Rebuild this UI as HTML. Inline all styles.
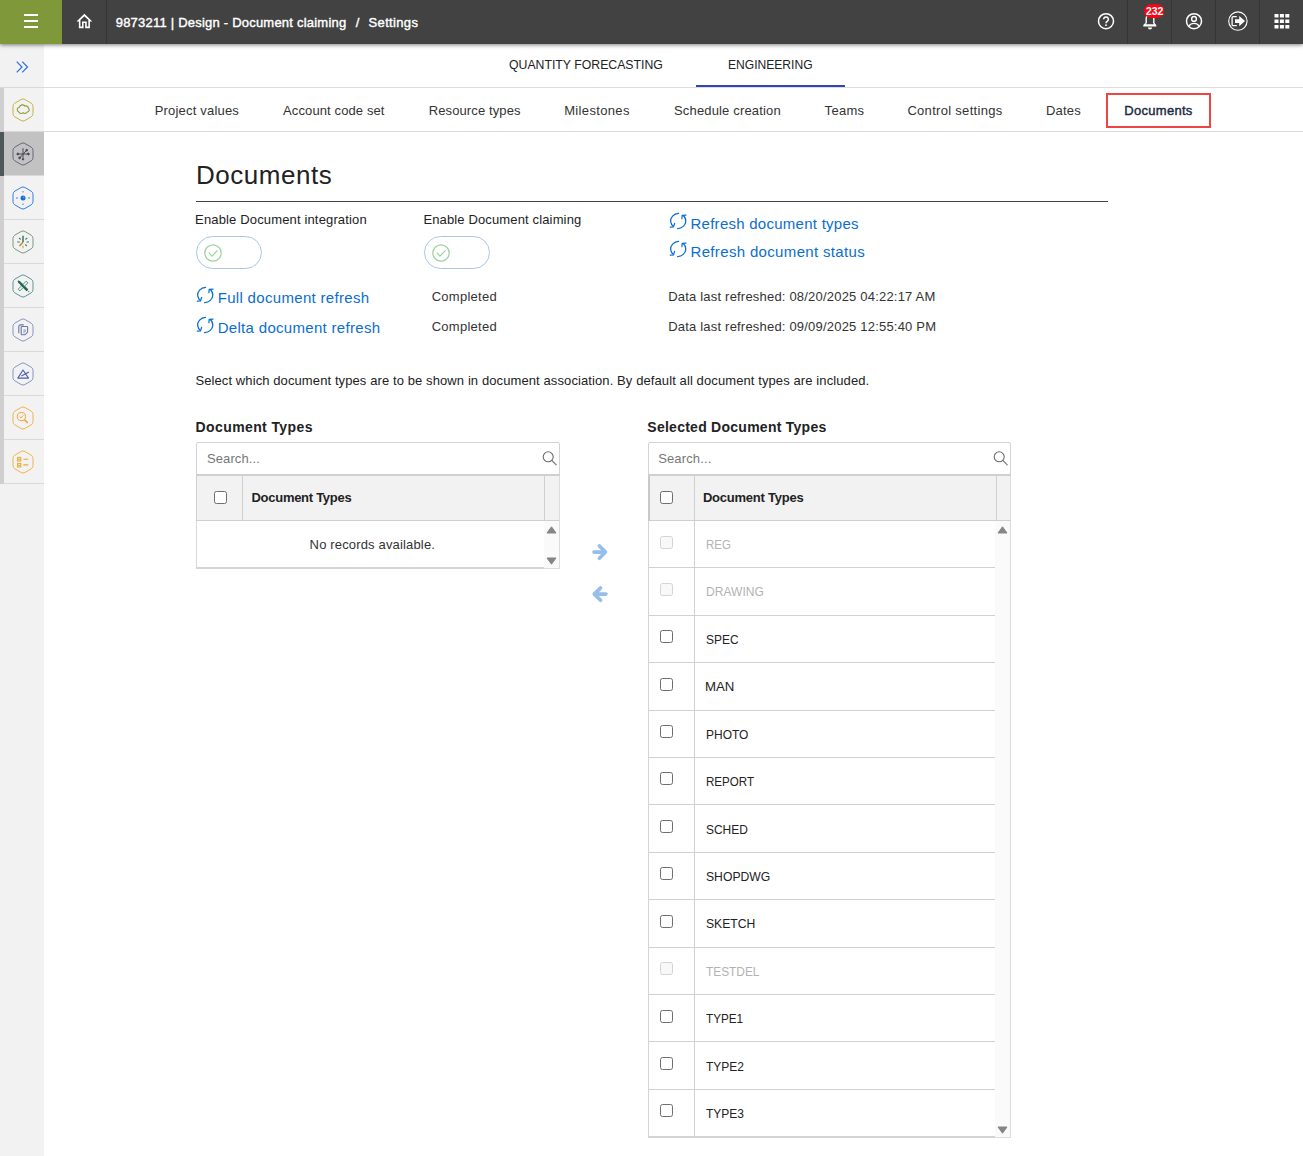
<!DOCTYPE html>
<html lang="en">
<head>
<meta charset="utf-8">
<title>Settings - Documents</title>
<style>
*{box-sizing:border-box;margin:0;padding:0}
html,body{width:1303px;height:1156px;overflow:hidden;background:#fff}
body{font-family:"Liberation Sans",sans-serif;font-size:13px;color:#333;position:relative}
.abs{position:absolute}
.t{position:absolute;white-space:nowrap;line-height:1;transform-origin:0 0;z-index:6}
#hdr{position:absolute;left:0;top:0;width:1303px;height:44px;background:#424242;box-shadow:0 1px 4px rgba(0,0,0,.5);z-index:5}
#burger{position:absolute;left:0;top:0;width:62px;height:44px;background:#7f993a}
#burger i{position:absolute;left:24px;width:14px;height:2px;background:#fff}
.vdiv{position:absolute;top:0;width:1px;height:44px;background:#353535}
#side{position:absolute;left:0;top:44px;width:44px;height:1112px;background:#f2f2f2}
#strip{position:absolute;left:0;top:43px;width:4px;height:397px;background:#cfcfcf}
.cell{position:absolute;left:4px;width:40px;height:44px;border-bottom:1px solid #d9d9d9}
.cell svg{position:absolute;left:7px;top:8px}
.hline{position:absolute;height:1px;background:#dcdcdc}
.toggle{position:absolute;width:66px;height:33px;border:1px solid #a9c6ea;border-radius:17px;background:#fff}
.search{position:absolute;height:33px;border:1px solid #d4d4d4;border-radius:2px;background:#fff}
.cb{position:absolute;width:13px;height:13px;border:1px solid #6e6e6e;border-radius:2.5px;background:#fff}
.cb.dis{border-color:#d4d4d4;background:#f8f8f8}
.hl{position:absolute;height:1px;background:#d0d0d0}
.vl{position:absolute;width:1px;background:#d0d0d0}
</style>
</head>
<body>
<!-- HEADER -->
<div id="hdr">
  <div id="burger"><i style="top:14px"></i><i style="top:20px"></i><i style="top:26px"></i></div>
  <div class="vdiv" style="left:106px"></div>
  <div class="vdiv" style="left:1127px"></div>
  <div class="vdiv" style="left:1171px"></div>
  <div class="vdiv" style="left:1215px"></div>
  <div class="vdiv" style="left:1259px"></div>
  <svg class="abs" style="left:75px;top:11px" width="19" height="20" viewBox="0 0 19 20"><g transform="translate(-0.1,0.35) scale(0.79,0.84)" fill="#fff"><path d="M12 5.69l5 4.5V18h-2v-6H9v6H7v-7.81l5-4.5M12 3L2 12h3v8h6v-6h2v6h6v-8h3L12 3z"/></g></svg>
  <!-- help -->
  <svg class="abs" style="left:1095px;top:10px" width="22" height="22" viewBox="0 0 22 22"><circle cx="11" cy="11.2" r="7.5" fill="none" stroke="#fff" stroke-width="1.5"/><path d="M8.6 9.3a2.4 2.4 0 1 1 3.6 2.1c-.8.5-1.2.9-1.2 1.9" fill="none" stroke="#fff" stroke-width="1.5"/><rect x="10.2" y="14.4" width="1.6" height="1.6" fill="#fff"/></svg>
  <!-- bell -->
  <svg class="abs" style="left:1139px;top:8px" width="22" height="24" viewBox="0 0 22 24"><path d="M7.200 15.400V10.500a3.800 3.800 0 0 1 7.600 0V15.400" fill="none" stroke="#fff" stroke-width="1.400"/><path d="M6.500 14.800L4.300 17v1.600h13V17l-2.200-2.200-.6 1.500H7.100z" fill="#fff"/><path d="M8.900 19.500h4.200a2.100 2.100 0 0 1-4.200 0z" fill="#fff"/></svg>
  <div class="abs" style="left:1144px;top:4px;width:20px;height:14px;border-radius:7px;background:#f40612"></div>
  <!-- user -->
  <svg class="abs" style="left:1183px;top:10px" width="22" height="22" viewBox="0 0 22 22"><circle cx="11" cy="11.2" r="7.5" fill="none" stroke="#fff" stroke-width="1.5"/><circle cx="11" cy="8.9" r="2.4" fill="none" stroke="#fff" stroke-width="1.4"/><path d="M5.9 16.2c1.2-2 3-2.8 5.1-2.8s3.9.8 5.1 2.8" fill="none" stroke="#fff" stroke-width="1.4"/></svg>
  <!-- logout -->
  <svg class="abs" style="left:1226px;top:9px" width="24" height="24" viewBox="0 0 24 24"><circle cx="11.9" cy="12.1" r="9.2" fill="none" stroke="#fff" stroke-width="1.1"/><path d="M10.8 7.6H7.3a1.2 1.2 0 0 0-1.2 1.2v6.6a1.2 1.2 0 0 0 1.2 1.2h3.5" fill="none" stroke="#fff" stroke-width="1.3"/><path d="M9 10.3h4.2V7l5.8 5.1-5.8 5.1v-3.3H9z" fill="#fff"/></svg>
  <!-- apps -->
  <svg class="abs" style="left:1274px;top:13px" width="16" height="16" viewBox="0 0 16 16" fill="#fff"><rect x=".5" y="1" width="4" height="3.5"/><rect x="5.9" y="1" width="4" height="3.5"/><rect x="11.3" y="1" width="4" height="3.5"/><rect x=".5" y="6.5" width="4" height="3.5"/><rect x="5.9" y="6.5" width="4" height="3.5"/><rect x="11.3" y="6.5" width="4" height="3.5"/><rect x=".5" y="12" width="4" height="3.5"/><rect x="5.9" y="12" width="4" height="3.5"/><rect x="11.3" y="12" width="4" height="3.5"/></svg>

</div>
<!-- SIDEBAR -->
<div id="side">
  <div id="strip"></div>
  <svg class="abs" style="left:15px;top:16px" width="14" height="14" viewBox="0 0 14 14" fill="none" stroke="#2f6fdc" stroke-width="1.2"><path d="M1.7 1.6 L7 7 L1.7 12.4"/><path d="M7.2 1.6 L12.5 7 L7.2 12.4"/></svg>
  <div class="cell" style="top:44px"><svg width="30" height="30" viewBox="0 0 30 30" style="left:3.7px;top:7.3px"><path d="M13.1 4.5Q15.0 3.4 16.9 4.5L23.1 8.1Q25.0 9.2 25.0 11.4L25.0 18.6Q25.0 20.8 23.1 21.9L16.9 25.5Q15.0 26.6 13.1 25.5L6.9 21.9Q5.0 20.8 5.0 18.6L5.0 11.4Q5.0 9.2 6.9 8.1Z" fill="none" stroke="#c6b447" stroke-width="1"/><path d="M10.800 17a2.500 2.500 0 0 1 .6-4.800 3.100 3.100 0 0 1 5.500-1.100 2.500 2.500 0 0 1 3.500 2.200 2.100 2.100 0 0 1-1.200 3.800 2.500 2.500 0 0 1-4 .6 2.700 2.700 0 0 1-4.400-.7z" fill="none" stroke="#8f9c33" stroke-width="1.100"/></svg></div>
  <div class="cell" style="top:88px;background:#c2c2c2"><svg width="30" height="30" viewBox="0 0 30 30" style="left:3.7px;top:7.3px"><path d="M13.1 4.5Q15.0 3.4 16.9 4.5L23.1 8.1Q25.0 9.2 25.0 11.4L25.0 18.6Q25.0 20.8 23.1 21.9L16.9 25.5Q15.0 26.6 13.1 25.5L6.9 21.9Q5.0 20.8 5.0 18.6L5.0 11.4Q5.0 9.2 6.9 8.1Z" fill="none" stroke="#6a6580" stroke-width="1"/><g stroke="#4a4a55" stroke-width="1" fill="#4a4a55"><path d="M15 9.200v11.400M9.600 15h11M11.500 19l7.200-7.800" fill="none"/><circle cx="9.800" cy="15" r=".9"/><circle cx="20.400" cy="15" r=".9"/><circle cx="18.700" cy="11.200" r=".9"/><circle cx="11.600" cy="18.900" r=".9"/><circle cx="15" cy="20.400" r=".7"/></g></svg></div>
  <div class="cell" style="top:132px"><svg width="30" height="30" viewBox="0 0 30 30" style="left:3.7px;top:7.3px"><path d="M13.1 4.5Q15.0 3.4 16.9 4.5L23.1 8.1Q25.0 9.2 25.0 11.4L25.0 18.6Q25.0 20.8 23.1 21.9L16.9 25.5Q15.0 26.6 13.1 25.5L6.9 21.9Q5.0 20.8 5.0 18.6L5.0 11.4Q5.0 9.2 6.9 8.1Z" fill="none" stroke="#2f80e4" stroke-width="1"/><circle cx="15" cy="15" r="2.500" fill="#1a6fd2"/><circle cx="15.700" cy="14.200" r=".7" fill="#6aa6ea"/><g fill="#2f80e4"><rect x="14.400" y="8.200" width="1.200" height="1.200"/><rect x="14.400" y="20.600" width="1.200" height="1.200"/><rect x="8.200" y="14.400" width="1.500" height="1.200"/><rect x="20.300" y="14.400" width="1.500" height="1.200"/></g></svg></div>
  <div class="cell" style="top:176px"><svg width="30" height="30" viewBox="0 0 30 30" style="left:3.7px;top:7.3px"><path d="M13.1 4.5Q15.0 3.4 16.9 4.5L23.1 8.1Q25.0 9.2 25.0 11.4L25.0 18.6Q25.0 20.8 23.1 21.9L16.9 25.5Q15.0 26.6 13.1 25.5L6.9 21.9Q5.0 20.8 5.0 18.6L5.0 11.4Q5.0 9.2 6.9 8.1Z" fill="none" stroke="#7a9a78" stroke-width="1"/><g stroke="#3f7f6a" stroke-width="1.100" fill="none"><path d="M9.200 15h2.600M18.600 15h2.400M11 10.800l1.700 1.700M19.200 10.800l-1.700 1.700M18.800 19l-1.500-1.500"/></g><path d="M15 8.800v6.400" stroke="#2e6b5e" stroke-width="1.400"/><path d="M15 15.200l-3.600 3.800" stroke="#b98a2a" stroke-width="1.400"/><path d="M15 18.400v2.800" stroke="#d9a33a" stroke-width="1.100"/></svg></div>
  <div class="cell" style="top:220px"><svg width="30" height="30" viewBox="0 0 30 30" style="left:3.7px;top:7.3px"><path d="M13.1 4.5Q15.0 3.4 16.9 4.5L23.1 8.1Q25.0 9.2 25.0 11.4L25.0 18.6Q25.0 20.8 23.1 21.9L16.9 25.5Q15.0 26.6 13.1 25.5L6.9 21.9Q5.0 20.8 5.0 18.6L5.0 11.4Q5.0 9.2 6.9 8.1Z" fill="none" stroke="#5e949a" stroke-width="1"/><path d="M10.800 10.600l8.600 8.600" stroke="#1f6b4c" stroke-width="2.200"/><path d="M10.200 18.200l8-8 1.700 1.700-8 8z" fill="#f2f2f2" stroke="#3f8a76" stroke-width=".9"/><path d="M13 13l6.400 6.400" stroke="#1f6b4c" stroke-width="2.200"/><path d="M10 9.800l1.200 1.200" stroke="#1f6b4c" stroke-width="1.400"/><circle cx="20.800" cy="20.600" r=".6" fill="#1f6b4c"/></svg></div>
  <div class="cell" style="top:264px"><svg width="30" height="30" viewBox="0 0 30 30" style="left:3.7px;top:7.3px"><path d="M13.1 4.5Q15.0 3.4 16.9 4.5L23.1 8.1Q25.0 9.2 25.0 11.4L25.0 18.6Q25.0 20.8 23.1 21.9L16.9 25.5Q15.0 26.6 13.1 25.5L6.9 21.9Q5.0 20.8 5.0 18.6L5.0 11.4Q5.0 9.2 6.9 8.1Z" fill="none" stroke="#8a94c2" stroke-width="1"/><g stroke="#6a78aa" stroke-width="1.100" fill="none"><path d="M15.800 9.900h-3.200a1.800 1.800 0 0 0-1.800 1.800v6.600"/><path d="M13.200 12.400a.9.900 0 0 1 .9-.9h4.600a.9.900 0 0 1 .9.900v4.600l-2.600 2.800h-2.900a.9.900 0 0 1-.9-.9z"/></g><path d="M15.400 14.600h2.600v2.200h-1.400v1.600h-1.200z" fill="#8a94c2" opacity=".7"/></svg></div>
  <div class="cell" style="top:308px"><svg width="30" height="30" viewBox="0 0 30 30" style="left:3.7px;top:7.3px"><path d="M13.1 4.5Q15.0 3.4 16.9 4.5L23.1 8.1Q25.0 9.2 25.0 11.4L25.0 18.6Q25.0 20.8 23.1 21.9L16.9 25.5Q15.0 26.6 13.1 25.5L6.9 21.9Q5.0 20.8 5.0 18.6L5.0 11.4Q5.0 9.2 6.9 8.1Z" fill="none" stroke="#8a94c2" stroke-width="1"/><g stroke="#4c5daa" stroke-width="1.100" fill="none" stroke-linejoin="round"><path d="M19.100 10.400l-5.200 8.100h10.700z" transform="translate(-4.100,.6)"/><path d="M13.400 17l7.500-4.100"/></g></svg></div>
  <div class="cell" style="top:352px"><svg width="30" height="30" viewBox="0 0 30 30" style="left:3.7px;top:7.3px"><path d="M13.1 4.5Q15.0 3.4 16.9 4.5L23.1 8.1Q25.0 9.2 25.0 11.4L25.0 18.6Q25.0 20.8 23.1 21.9L16.9 25.5Q15.0 26.6 13.1 25.5L6.9 21.9Q5.0 20.8 5.0 18.6L5.0 11.4Q5.0 9.2 6.9 8.1Z" fill="none" stroke="#f4b349" stroke-width="1"/><g stroke="#f0a630" stroke-width="1" fill="none"><circle cx="13.400" cy="13.600" r="4.100"/><path d="M11.700 13.600l1.300 1.300 2.300-2.500"/></g><path d="M16.600 16.900l3.200 3.100" stroke="#f0a630" stroke-width="1.700"/></svg></div>
  <div class="cell" style="top:396px"><svg width="30" height="30" viewBox="0 0 30 30" style="left:3.7px;top:7.3px"><path d="M13.1 4.5Q15.0 3.4 16.9 4.5L23.1 8.1Q25.0 9.2 25.0 11.4L25.0 18.6Q25.0 20.8 23.1 21.9L16.9 25.5Q15.0 26.6 13.1 25.5L6.9 21.9Q5.0 20.8 5.0 18.6L5.0 11.4Q5.0 9.2 6.9 8.1Z" fill="none" stroke="#f4b349" stroke-width="1"/><g stroke="#f0a630" stroke-width="1" fill="none"><rect x="9.600" y="10.400" width="3.200" height="3.600"/><rect x="9.600" y="16.400" width="3.200" height="3.600"/><path d="M9.600 12.200h3.200M9.600 18.200h3.200M15.400 12.200h4.800M15.400 17.900h4.800" stroke-width="1.100"/></g></svg></div>
  <div class="abs" style="left:0;top:88px;width:4px;height:44px;background:#4d5759"></div>
  <div class="abs" style="left:0;top:43px;width:44px;height:1px;background:#d9d9d9"></div>
</div>
<!-- TAB BARS -->
<div class="hline" style="left:44px;top:87px;width:1259px"></div>
<div class="hline" style="left:44px;top:131px;width:1259px"></div>
<div class="abs" style="left:696px;top:85px;width:149px;height:2px;background:#3344b4"></div>
<div class="abs" style="left:1106px;top:93px;width:105px;height:35px;border:2px solid #ee4444"></div>
<!-- CONTENT -->
<div class="abs" style="left:196px;top:201px;width:912px;height:1px;background:#444"></div>
<div class="toggle" style="left:196px;top:236px"><svg class="abs" style="left:5.5px;top:5.5px" width="20" height="20" viewBox="0 0 20 20" fill="none" stroke="#9cd29c" stroke-width="1.2"><circle cx="10" cy="10" r="8.2"/><path d="M5.800 9.600l3.200 3.500 5.500-5.800"/></svg></div>
<div class="toggle" style="left:424px;top:236px"><svg class="abs" style="left:5.5px;top:5.5px" width="20" height="20" viewBox="0 0 20 20" fill="none" stroke="#9cd29c" stroke-width="1.2"><circle cx="10" cy="10" r="8.2"/><path d="M5.800 9.600l3.200 3.500 5.500-5.800"/></svg></div>
<svg class="abs" style="left:196px;top:286px" width="18" height="18" viewBox="0 0 18 18" fill="none" stroke="#0a6ed1" stroke-width="1.25" stroke-linecap="round" stroke-linejoin="round"><path d="M9.600 1.300C4.600 1.600 1.200 5.600 1.700 9.600c.3 2 1.200 3.700 2.700 5"/><path d="M5.600 11.400l-1.100 3.400-3.200.4"/><path d="M8.600 16.600c4.400-.2 8-3.300 8.200-7.200.1-2.300-.8-4.300-2.600-5.800"/><path d="M17 3.100l-3.800.3-.3 3.300"/></svg>
<svg class="abs" style="left:196px;top:316px" width="18" height="18" viewBox="0 0 18 18" fill="none" stroke="#0a6ed1" stroke-width="1.25" stroke-linecap="round" stroke-linejoin="round"><path d="M9.600 1.300C4.600 1.600 1.200 5.600 1.700 9.600c.3 2 1.200 3.700 2.700 5"/><path d="M5.600 11.400l-1.100 3.400-3.200.4"/><path d="M8.600 16.600c4.400-.2 8-3.300 8.200-7.200.1-2.300-.8-4.300-2.600-5.800"/><path d="M17 3.100l-3.800.3-.3 3.300"/></svg>
<svg class="abs" style="left:668.5px;top:212px" width="18" height="18" viewBox="0 0 18 18" fill="none" stroke="#0a6ed1" stroke-width="1.25" stroke-linecap="round" stroke-linejoin="round"><path d="M9.600 1.300C4.600 1.600 1.200 5.600 1.700 9.600c.3 2 1.200 3.700 2.700 5"/><path d="M5.600 11.400l-1.100 3.400-3.200.4"/><path d="M8.600 16.600c4.400-.2 8-3.300 8.200-7.200.1-2.300-.8-4.300-2.600-5.800"/><path d="M17 3.100l-3.800.3-.3 3.300"/></svg>
<svg class="abs" style="left:668.5px;top:240px" width="18" height="18" viewBox="0 0 18 18" fill="none" stroke="#0a6ed1" stroke-width="1.25" stroke-linecap="round" stroke-linejoin="round"><path d="M9.600 1.300C4.600 1.600 1.200 5.600 1.700 9.600c.3 2 1.200 3.700 2.700 5"/><path d="M5.600 11.400l-1.100 3.400-3.200.4"/><path d="M8.600 16.600c4.400-.2 8-3.300 8.200-7.200.1-2.300-.8-4.300-2.600-5.800"/><path d="M17 3.100l-3.800.3-.3 3.300"/></svg>
<div class="search" style="left:196px;top:442px;width:364px"><svg class="abs" style="left:344px;top:7px" width="18" height="18" viewBox="0 0 18 18" fill="none" stroke="#6b6b6b" stroke-width="1.100"><circle cx="7.200" cy="6.800" r="5"/><path d="M10.800 10.400l4.700 4.700"/></svg></div>
<div class="abs" style="left:196px;top:474px;width:364px;height:2px;background:#d0d0d0"></div>
<div class="abs" style="left:196px;top:476px;width:364px;height:45px;background:#f2f2f2;border-left:1px solid #d0d0d0;border-right:1px solid #dcdcdc;border-bottom:1px solid #cfcfcf"></div>
<div class="vl" style="left:242px;top:476px;height:44px"></div>
<div class="vl" style="left:544px;top:476px;height:44px"></div>
<div class="cb" style="left:214px;top:491px"></div>
<div class="abs" style="left:196px;top:521px;width:364px;height:48px;border-left:1px solid #d8d8d8;border-right:1px solid #dcdcdc"></div>
<div class="abs" style="left:544px;top:521px;width:15px;height:48px;background:#fafafa"></div>
<div class="abs" style="left:196px;top:567px;width:348px;height:2px;background:#d4d4d4"></div>
<div class="abs" style="left:544px;top:568px;width:16px;height:1px;background:#dcdcdc"></div>
<svg class="abs" style="left:546px;top:525.5px" width="11" height="8" viewBox="0 0 11 8"><path d="M5.500 .8L10 7H1z" fill="#858585" stroke="#858585" stroke-width="1" stroke-linejoin="round"/></svg>
<svg class="abs" style="left:546px;top:556.5px" width="11" height="8" viewBox="0 0 11 8"><path d="M5.500 7.200L10 1H1z" fill="#858585" stroke="#858585" stroke-width="1" stroke-linejoin="round"/></svg>
<svg class="abs" style="left:591px;top:543px" width="18" height="18" viewBox="0 0 18 18" fill="none" stroke="#95bfea" stroke-width="3.600" stroke-linecap="round" stroke-linejoin="round"><path d="M3 9.100H13M8.400 2.900L14.500 9.100L8.400 15.300"/></svg>
<svg class="abs" style="left:590.900px;top:585px" width="18" height="18" viewBox="0 0 18 18" fill="none" stroke="#95bfea" stroke-width="3.600" stroke-linecap="round" stroke-linejoin="round"><path d="M15 9.100H5M9.600 2.900L3.300 9.100L9.600 15.300"/></svg>
<div class="search" style="left:648px;top:442px;width:363px"><svg class="abs" style="left:343px;top:7px" width="18" height="18" viewBox="0 0 18 18" fill="none" stroke="#6b6b6b" stroke-width="1.100"><circle cx="7.200" cy="6.800" r="5"/><path d="M10.800 10.400l4.700 4.700"/></svg></div>
<div class="abs" style="left:648px;top:474px;width:363px;height:2px;background:#d0d0d0"></div>
<div class="abs" style="left:648px;top:476px;width:363px;height:45px;background:#f2f2f2;border-left:1px solid #d0d0d0;border-right:1px solid #dcdcdc;border-bottom:1px solid #cfcfcf"></div>
<div class="vl" style="left:694px;top:476px;height:44px"></div>
<div class="vl" style="left:996px;top:476px;height:44px"></div>
<div class="cb" style="left:660px;top:491px"></div>
<div class="abs" style="left:648px;top:476px;width:2px;height:45px;background:#c8c8c8"></div>
<div class="abs" style="left:648px;top:521px;width:363px;height:617px;border-left:1px solid #d4d4d4;border-right:1px solid #dcdcdc"></div>
<div class="abs" style="left:995px;top:521px;width:15px;height:617px;background:#fafafa"></div>
<div class="vl" style="left:694px;top:521px;height:615px"></div>
<div class="hl" style="left:649px;top:567px;width:346px"></div>
<div class="cb dis" style="left:660px;top:536px"></div>
<div class="hl" style="left:649px;top:615px;width:346px"></div>
<div class="cb dis" style="left:660px;top:583px"></div>
<div class="hl" style="left:649px;top:662px;width:346px"></div>
<div class="cb" style="left:660px;top:630px"></div>
<div class="hl" style="left:649px;top:710px;width:346px"></div>
<div class="cb" style="left:660px;top:678px"></div>
<div class="hl" style="left:649px;top:757px;width:346px"></div>
<div class="cb" style="left:660px;top:725px"></div>
<div class="hl" style="left:649px;top:804px;width:346px"></div>
<div class="cb" style="left:660px;top:772px"></div>
<div class="hl" style="left:649px;top:852px;width:346px"></div>
<div class="cb" style="left:660px;top:820px"></div>
<div class="hl" style="left:649px;top:899px;width:346px"></div>
<div class="cb" style="left:660px;top:867px"></div>
<div class="hl" style="left:649px;top:947px;width:346px"></div>
<div class="cb" style="left:660px;top:915px"></div>
<div class="hl" style="left:649px;top:994px;width:346px"></div>
<div class="cb dis" style="left:660px;top:962px"></div>
<div class="hl" style="left:649px;top:1041px;width:346px"></div>
<div class="cb" style="left:660px;top:1010px"></div>
<div class="hl" style="left:649px;top:1089px;width:346px"></div>
<div class="cb" style="left:660px;top:1057px"></div>
<div class="cb" style="left:660px;top:1104px"></div>
<div class="abs" style="left:648px;top:1136px;width:347px;height:2px;background:#d4d4d4"></div>
<div class="abs" style="left:995px;top:1137px;width:16px;height:1px;background:#dcdcdc"></div>
<svg class="abs" style="left:996.8px;top:525.5px" width="11" height="8" viewBox="0 0 11 8"><path d="M5.500 .8L10 7H1z" fill="#858585" stroke="#858585" stroke-width="1" stroke-linejoin="round"/></svg>
<svg class="abs" style="left:996.8px;top:1126px" width="11" height="8" viewBox="0 0 11 8"><path d="M5.500 7.200L10 1H1z" fill="#858585" stroke="#858585" stroke-width="1" stroke-linejoin="round"/></svg>
<div class="t" id="c1" style="left:115.7px;top:16px;font-size:13px;color:#fff;-webkit-text-stroke:0.4px #fff;letter-spacing:0.22px">9873211 | Design - Document claiming</div>
<div class="t" id="c2" style="left:355.7px;top:16px;font-size:13px;color:#fff;-webkit-text-stroke:0.4px #fff">/</div>
<div class="t" id="c3" style="left:368.6px;top:16px;font-size:13px;color:#fff;-webkit-text-stroke:0.4px #fff;letter-spacing:0.33px">Settings</div>
<div class="t" id="bd" style="left:1146px;top:5.8px;font-size:10.5px;color:#fff;font-weight:bold;transform:scaleX(0.994)">232</div>
<div class="t" id="t1a" style="left:509px;top:58px;font-size:13px;color:#222;transform:scaleX(0.944)">QUANTITY FORECASTING</div>
<div class="t" id="t1b" style="left:728.1px;top:58px;font-size:13px;color:#222;transform:scaleX(0.929)">ENGINEERING</div>
<div class="t" id="t2a" style="left:154.7px;top:104px;font-size:13px;color:#333;letter-spacing:0.19px">Project values</div>
<div class="t" id="t2b" style="left:283.1px;top:104px;font-size:13px;color:#333;letter-spacing:0.11px">Account code set</div>
<div class="t" id="t2c" style="left:428.7px;top:104px;font-size:13px;color:#333;letter-spacing:0.12px">Resource types</div>
<div class="t" id="t2d" style="left:564.2px;top:104px;font-size:13px;color:#333;letter-spacing:0.34px">Milestones</div>
<div class="t" id="t2e" style="left:674px;top:104px;font-size:13px;color:#333;letter-spacing:0.16px">Schedule creation</div>
<div class="t" id="t2f" style="left:824.6px;top:104px;font-size:13px;color:#333;letter-spacing:0.3px">Teams</div>
<div class="t" id="t2g" style="left:907.4px;top:104px;font-size:13px;color:#333;letter-spacing:0.3px">Control settings</div>
<div class="t" id="t2h" style="left:1046px;top:104px;font-size:13px;color:#333;letter-spacing:0.18px">Dates</div>
<div class="t" id="t2i" style="left:1124.3px;top:104px;font-size:13px;color:#1d2740;-webkit-text-stroke:0.4px #1d2740;letter-spacing:0.29px">Documents</div>
<div class="t" id="h1" style="left:196px;top:162px;font-size:26px;color:#222;letter-spacing:0.54px">Documents</div>
<div class="t" id="l1" style="left:195.1px;top:213px;font-size:13px;color:#222;letter-spacing:0.15px">Enable Document integration</div>
<div class="t" id="l2" style="left:423.4px;top:213px;font-size:13px;color:#222;letter-spacing:0.14px">Enable Document claiming</div>
<div class="t" id="k1" style="left:217.7px;top:290px;font-size:15px;color:#0a6ed1;letter-spacing:0.32px">Full document refresh</div>
<div class="t" id="k2" style="left:217.7px;top:320px;font-size:15px;color:#0a6ed1;letter-spacing:0.31px">Delta document refresh</div>
<div class="t" id="s1" style="left:431.7px;top:290px;font-size:13px;color:#333;letter-spacing:0.27px">Completed</div>
<div class="t" id="s2" style="left:431.7px;top:320px;font-size:13px;color:#333;letter-spacing:0.27px">Completed</div>
<div class="t" id="d1" style="left:668.2px;top:290px;font-size:13px;color:#333;letter-spacing:0.2px">Data last refreshed: 08/20/2025 04:22:17 AM</div>
<div class="t" id="d2" style="left:668.2px;top:320px;font-size:13px;color:#333;letter-spacing:0.2px">Data last refreshed: 09/09/2025 12:55:40 PM</div>
<div class="t" id="k3" style="left:690.5px;top:216px;font-size:15px;color:#0a6ed1;letter-spacing:0.26px">Refresh document types</div>
<div class="t" id="k4" style="left:690.5px;top:244px;font-size:15px;color:#0a6ed1;letter-spacing:0.34px">Refresh document status</div>
<div class="t" id="p1" style="left:195.4px;top:374px;font-size:13px;color:#222;letter-spacing:0.1px">Select which document types are to be shown in document association. By default all document types are included.</div>
<div class="t" id="g1" style="left:195.6px;top:420px;font-size:14px;color:#222;font-weight:bold;letter-spacing:0.39px">Document Types</div>
<div class="t" id="g2" style="left:647.3px;top:420px;font-size:14px;color:#222;font-weight:bold;letter-spacing:0.26px">Selected Document Types</div>
<div class="t" id="q1" style="left:207px;top:452px;font-size:13px;color:#777;letter-spacing:0.1px">Search...</div>
<div class="t" id="q2" style="left:658.2px;top:452px;font-size:13px;color:#777;letter-spacing:0.14px">Search...</div>
<div class="t" id="gh1" style="left:251.5px;top:491px;font-size:13px;color:#222;font-weight:bold;letter-spacing:-0.28px">Document Types</div>
<div class="t" id="gh2" style="left:702.9px;top:491px;font-size:13px;color:#222;font-weight:bold;letter-spacing:-0.23px">Document Types</div>
<div class="t" id="nr" style="left:309.6px;top:538px;font-size:13px;color:#333;letter-spacing:0.16px">No records available.</div>
<div class="t" id="r0" style="left:705.5px;top:538px;font-size:13px;color:#b3b3b3;transform:scaleX(0.881)">REG</div>
<div class="t" id="r1" style="left:705.5px;top:585px;font-size:13px;color:#b3b3b3;transform:scaleX(0.928)">DRAWING</div>
<div class="t" id="r2" style="left:705.5px;top:633px;font-size:13px;color:#222;transform:scaleX(0.918)">SPEC</div>
<div class="t" id="r3" style="left:705.4px;top:680px;font-size:13px;color:#222;transform:scaleX(1.019)">MAN</div>
<div class="t" id="r4" style="left:705.5px;top:728px;font-size:13px;color:#222;transform:scaleX(0.922)">PHOTO</div>
<div class="t" id="r5" style="left:705.5px;top:775px;font-size:13px;color:#222;transform:scaleX(0.891)">REPORT</div>
<div class="t" id="r6" style="left:705.5px;top:823px;font-size:13px;color:#222;transform:scaleX(0.92)">SCHED</div>
<div class="t" id="r7" style="left:705.5px;top:870px;font-size:13px;color:#222;transform:scaleX(0.937)">SHOPDWG</div>
<div class="t" id="r8" style="left:705.5px;top:917px;font-size:13px;color:#222;transform:scaleX(0.937)">SKETCH</div>
<div class="t" id="r9" style="left:706.4px;top:965px;font-size:13px;color:#b3b3b3;transform:scaleX(0.914)">TESTDEL</div>
<div class="t" id="r10" style="left:706.4px;top:1012px;font-size:13px;color:#222;transform:scaleX(0.9)">TYPE1</div>
<div class="t" id="r11" style="left:706.4px;top:1060px;font-size:13px;color:#222;transform:scaleX(0.924)">TYPE2</div>
<div class="t" id="r12" style="left:706.4px;top:1107px;font-size:13px;color:#222;transform:scaleX(0.924)">TYPE3</div>
</body>
</html>
